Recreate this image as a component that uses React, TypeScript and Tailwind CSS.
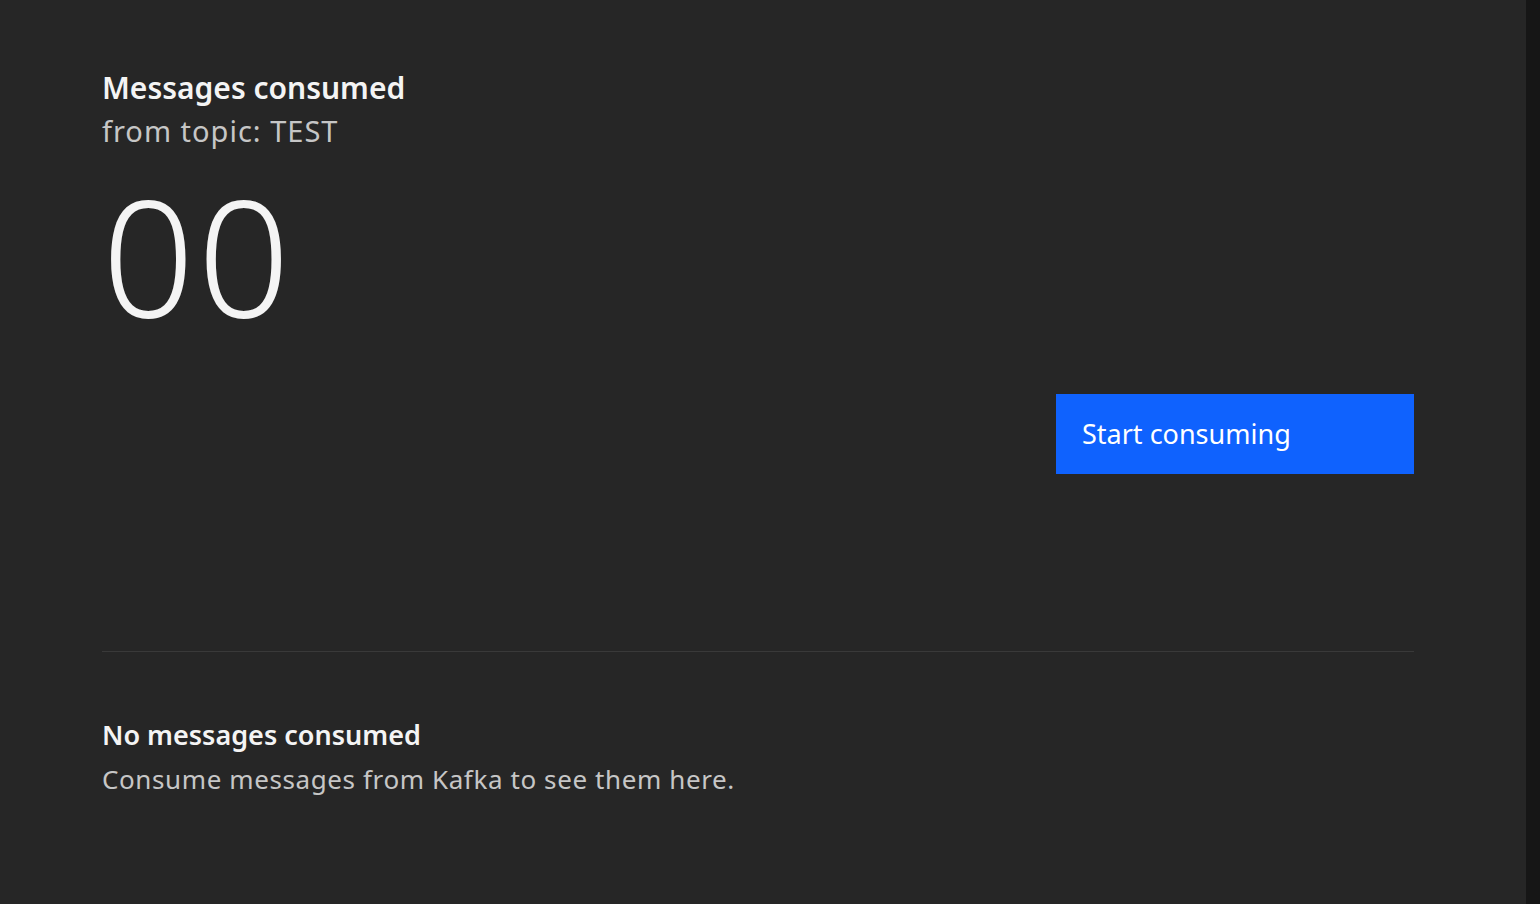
export default function App() {
  return (
    <div className="flex h-[904px] w-[1540px] bg-[#262626] font-['Noto_Sans',sans-serif] text-[#f4f4f4]">
      <main className="flex-1 px-[102px] pt-[70px]">
        <div className="flex w-[1312px] flex-col">
          <h1 className="text-[30px] leading-[36px] font-semibold">Messages consumed</h1>
          <p className="mt-[7px] text-[29px] leading-[36px] font-normal tracking-[1px] text-[#c6c6c6]">
            from topic: TEST
          </p>
          <div className="mt-[7px] h-[196px] text-[162px] leading-[196px] font-light tracking-[3px]">00</div>
          <div className="mt-[42px] flex justify-end">
            <button className="h-[80px] w-[358px] bg-[#0f62fe] px-[26px] text-left text-[27px] font-normal text-white">
              Start consuming
            </button>
          </div>
          <hr className="mt-[177px] border-t border-[#393939]" />
          <h2 className="mt-[66px] text-[27px] leading-[34px] font-semibold">No messages consumed</h2>
          <p className="mt-[10px] text-[26px] leading-[34px] font-normal tracking-[0.6px] text-[#c6c6c6]">
            Consume messages from Kafka to see them here.
          </p>
        </div>
      </main>
      <aside className="w-[14px] bg-[#161616]" />
    </div>
  )
}
